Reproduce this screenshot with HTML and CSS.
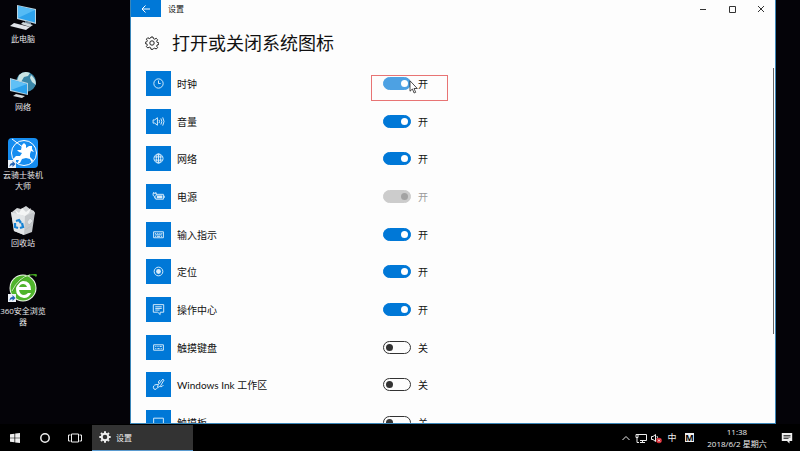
FILE: index.html
```html
<!DOCTYPE html>
<html lang="zh-CN">
<head>
    <meta charset="UTF-8">
    <meta name="viewport" content="width=device-width, initial-scale=1.0">
    <title>设置</title>
    <link rel="stylesheet" href="styles.css">
</head>
<body>

    <div class="desktop">
        <nav class="shortcuts">
            <button type="button" class="shortcut">
                <svg viewBox="0 0 32 32">
                    <path d="M10 4l19 4v15l-19-5z" fill="#b9d3e0"/>
                    <path d="M11 5l17 4v12.500l-17-4.500z" fill="#2da2ec"/>
                    <path d="M11 5l17 4-17 8z" fill="#55bbf5"/>
                    <path d="M18 20l6 1v3l-6-2z" fill="#71889a"/>
                    <path d="M16 21l10 3-3 2-9-3z" fill="#cfd8dc"/>
                    <path d="M7 22l16 4-4 3-16-4z" fill="#dfe3e8"/>
                </svg>
                <span>此电脑</span>
            </button>
            <button type="button" class="shortcut">
                <svg viewBox="0 0 32 32">
                    <circle cx="19" cy="13" r="10" fill="#3a87a8"/>
                    <path d="M12 6q5-5 11-2l-2 3-4 1-3 5-4-1zM24 6q5 4 5 10l-4-3-2-4z" fill="#c9e4e4"/>
                    <path d="M3 9l18 5v12l-18-4z" fill="#b9d3e0"/>
                    <path d="M4 10.500l16 4.500v10l-16-4z" fill="#2da2ec"/>
                    <path d="M4 10.500l16 4.500-16 6z" fill="#60c0f6"/>
                    <path d="M9 25l9 2-3 2-9-2z" fill="#d4dadd"/>
                </svg>
                <span>网络</span>
            </button>
            <button type="button" class="shortcut">
                <svg viewBox="0 0 32 32">
                    <rect x="1" y="1" width="30" height="30" rx="4" fill="#168df0"/>
                    <circle cx="17" cy="16" r="12.500" fill="none" stroke="#fff"/>
                    <path d="M5 2l12 9" stroke="#fff"/>
                    <path d="M15 8l2-2 2 2v3l3-2 3 0v3l2 3-3-1-1 3 0 3 3 3-1 3-2-4-4-1-4 1-2 4-3 1 2-4-3 0-2 2-1-3 3-3 4 0 2-3-3-1-2-2 4 0z" fill="#fff"/>
                    <rect x="1" y="23" width="8" height="8" fill="#eef3f8"/>
                    <path d="M2.500 30q0-4 3-4v-2l3 3-3 3v-2q-2 0-3 2z" fill="#2464b4"/>
                </svg>
                <span>云骑士装机<br>大师</span>
            </button>
            <button type="button" class="shortcut">
                <svg viewBox="0 0 32 32">
                    <path d="M5 7l5-4 4 1 5-3 4 3 4 2 1 3-7 3-14-3z" fill="#d2d5d7"/>
                    <path d="M4 7l14 4 10-4-3 20-8 3-10-4z" fill="#c4c7ca"/>
                    <path d="M4 7l14 4-1 19-10-4z" fill="#e3e6e8"/>
                    <path d="M8 5l4 3 3-5 4 4 5-4-2 5-4 3-8-2z" fill="#f4f5f5"/>
                    <path d="M20 17l3-4 3 3-4 4zM18 25l6-4" fill="#e3e6e8" stroke="#afb3b7" stroke-width=".500"/>
                    <path d="M9 16l3-1 2 3M15 18l1 4-3 1M11 23l-3-1 0-4" fill="none" stroke="#1783d4" stroke-width="2.300"/>
                </svg>
                <span>回收站</span>
            </button>
            <button type="button" class="shortcut">
                <svg viewBox="0 0 32 32">
                    <circle cx="16" cy="15" r="13.500" fill="#f3faee"/>
                    <circle cx="16" cy="15" r="12.500" fill="#4fb42b"/>
                    <path d="M24 17H12q1 5 5 5 2 0 4-2h3q-2 5-7 5-8-1-8-9 0-7 7-8 8 0 8 9zM12 14h8q-1-3-4-3t-4 3z" fill="#fff" fill-rule="evenodd"/>
                    <path d="M5 18Q13 0 29 1q2 1 0 3-2-3-7-1-9 3-15 15z" fill="#43a321"/>
                    <path d="M5 18Q12 4 23 2" fill="none" stroke="#e6f6dc" stroke-width=".800"/>
                    <rect x="1" y="21" width="8" height="8" fill="#eef3f8"/>
                    <path d="M2.500 28q0-4 3-4v-2l3 3-3 3v-2q-2 0-3 2z" fill="#2464b4"/>
                </svg>
                <span>360安全浏览<br>器</span>
            </button>
        </nav>

        <main class="window">
            <header class="titlebar">
                <button type="button" class="back" aria-label="返回">
                    <svg viewBox="0 0 10 10"><path d="M9 5H1M4.500 1.500L1 5l3.500 3.500"/></svg>
                </button>
                <span class="caption">设置</span>
                <button type="button" class="win-btn" aria-label="最小化">
                    <svg viewBox="0 0 8 8"><path d="M1 4.500h6"/></svg>
                </button>
                <button type="button" class="win-btn" aria-label="最大化">
                    <svg viewBox="0 0 8 8"><path d="M1.500 1.500h6v6h-6z"/></svg>
                </button>
                <button type="button" class="win-btn" aria-label="关闭">
                    <svg viewBox="0 0 8 8"><path d="M1 1l6 6M7 1L1 7"/></svg>
                </button>
            </header>

            <div class="heading">
                <svg viewBox="0 0 14 14">
                    <path d="M6 1h2l.400 1.600 1.300.600 1.500-.900 1.400 1.400-.900 1.500.500 1.200 1.600.400v1.700l-1.600.400-.500 1.300.900 1.400-1.400 1.400-1.500-.800-1.300.500L8 13.300H6l-.400-1.600-1.300-.500-1.500.800-1.400-1.400.900-1.400-.500-1.300L.300 7.600V6.200l1.500-.400.500-1.200-.900-1.500 1.400-1.400 1.500.900 1.300-.600z"/>
                    <circle cx="7" cy="7" r="2.200"/>
                </svg>
                <h1>打开或关闭系统图标</h1>
            </div>

            <ul class="icon-list">
                <li>
                    <span class="tile"><svg viewBox="0 0 12 12"><circle cx="6" cy="6" r="4.300"/><path d="M6 3.200V6h2"/></svg></span>
                    <label for="clock">时钟</label>
                    <input type="checkbox" id="clock" class="hover" checked><span class="state">开</span>
                    <span class="marker"></span>
                    <svg class="cursor" viewBox="0 0 9 14"><path d="M1 .800v10.400l2.400-2.200 1.700 4 1.600-.700-1.700-3.800h3.300z"/></svg>
                </li>
                <li>
                    <span class="tile"><svg viewBox="0 0 12 12"><path d="M1 4.500h1.500L5 2.500v7L2.500 7.500H1zM6.500 4.500q1 1.500 0 3M8.200 3.200q1.800 2.800 0 5.600M9.900 2.200q2.400 3.800 0 7.600"/></svg></span>
                    <label for="volume">音量</label>
                    <input type="checkbox" id="volume" checked><span class="state">开</span>
                </li>
                <li>
                    <span class="tile"><svg viewBox="0 0 12 12"><circle cx="6" cy="6" r="4.200"/><ellipse cx="6" cy="6" rx="2" ry="4.200"/><path d="M2.300 4.500h7.400M2.300 7.500h7.400M6 2v8"/></svg></span>
                    <label for="network">网络</label>
                    <input type="checkbox" id="network" checked><span class="state">开</span>
                </li>
                <li>
                    <span class="tile"><svg viewBox="0 0 12 12"><path d="M4 4h6.500v4.500H3.500V7M11.300 5.300v2M1 3v2q1.500 2 3 0V3zM1.500 3V2M3.500 3V2M2.500 6v1.500h1"/><path class="solid" d="M4.500 5h5v2.700h-5z"/></svg></span>
                    <label for="power">电源</label>
                    <input type="checkbox" id="power" checked disabled><span class="state off">开</span>
                </li>
                <li>
                    <span class="tile"><svg viewBox="0 0 12 12"><path d="M1.500 3.500h9v5.500h-9zM2.800 5h1M4.800 5h1M6.800 5h1M8.500 5h1M3 6.300h6M2.800 7.700h1M4.500 7.700h3M8.300 7.700h1"/></svg></span>
                    <label for="input">输入指示</label>
                    <input type="checkbox" id="input" checked><span class="state">开</span>
                </li>
                <li>
                    <span class="tile"><svg viewBox="0 0 12 12"><circle cx="6" cy="6" r="4"/><circle class="solid" cx="6" cy="6" r="2.200"/></svg></span>
                    <label for="location">定位</label>
                    <input type="checkbox" id="location" checked><span class="state">开</span>
                </li>
                <li>
                    <span class="tile"><svg viewBox="0 0 12 12"><path d="M1.200 1.500h9.600v7H7.500v2.200L5.300 8.500H1.200zM3 3.500h6M3 5h6M3 6.500h4"/></svg></span>
                    <label for="action">操作中心</label>
                    <input type="checkbox" id="action" checked><span class="state">开</span>
                </li>
                <li>
                    <span class="tile"><svg viewBox="0 0 12 12"><path d="M1.500 3.500h9v5h-9zM3 5h1M5 5h1M7 5h2M3 7h1M5 7h2M8 7h1"/></svg></span>
                    <label for="touch">触摸键盘</label>
                    <input type="checkbox" id="touch"><span class="state">关</span>
                </li>
                <li>
                    <span class="tile"><svg viewBox="0 0 12 12"><path d="M10 1L6 6 5 8l1.500.500 1.500-1.500L11 2zM5.500 6Q1.500 5.800 1.200 8.500q0 2.500 2.500 2L5.500 8.500M7.500 8q2 .500 3-1.500M7.500 2q-2 .500-1.500 3"/></svg></span>
                    <label for="ink">Windows Ink 工作区</label>
                    <input type="checkbox" id="ink"><span class="state">关</span>
                </li>
                <li>
                    <span class="tile"><svg viewBox="0 0 12 12"><path d="M1.500 2h9v8h-9zM1.500 7.500h9M6 7.500V10"/></svg></span>
                    <label for="touchpad">触摸板</label>
                    <input type="checkbox" id="touchpad"><span class="state">关</span>
                </li>
            </ul>
            <span class="scrollbar"></span>
        </main>
    </div>

    <footer class="taskbar">
        <button type="button" aria-label="开始">
            <svg viewBox="0 0 12 12"><path class="solid" d="M1 2.300l4.500-.600v4H1zM6.200 1.600L11 1v4.700H6.200zM1 6.300h4.500v4L1 9.700zM6.200 6.300H11V11l-4.800-.600z"/></svg>
        </button>
        <button type="button" aria-label="搜索">
            <svg viewBox="0 0 12 12"><circle cx="6" cy="6" r="4.200" stroke-width="1.500"/></svg>
        </button>
        <button type="button" aria-label="任务视图">
            <svg class="wide" viewBox="0 0 14 12"><path d="M3.500 2h7v8h-7zM2.500 3h-2v6h2M11.500 3h2v6h-2"/></svg>
        </button>
        <button type="button" class="app">
            <svg viewBox="0 0 12 12">
                <circle cx="6" cy="6" r="3.300" stroke-width="2"/>
                <path d="M6 .300v2M6 9.700v2M.300 6h2M9.700 6h2M2 2l1.300 1.300M8.700 8.700L10 10M10 2L8.700 3.300M3.300 8.700L2 10" stroke-width="2"/>
            </svg>
            设置
        </button>
        <div class="tray">
            <svg viewBox="0 0 12 12"><path d="M2.500 8L6 4.500 9.500 8"/></svg>
            <svg viewBox="0 0 12 12"><path d="M3 2.500h8.500v6H5M7.500 8.500v2M5 10.500h5M1 2.500h2v3H1zM2 5.500v5h2"/></svg>
            <svg viewBox="0 0 12 12"><path d="M1.500 4.500H3l2.500-2v7L3 7.500H1.500z"/><path d="M7 4q1 2 0 3"/><circle cx="9" cy="8.500" r="2.800" fill="#d92b35" stroke="none"/><path d="M8 7.500l2 2M10 7.500l-2 2"/></svg>
            <span class="ime">中</span>
            <span class="ime-mode">M</span>
        </div>
        <time class="clock"><span>11:38</span><span>2018/6/2 星期六</span></time>
        <button type="button" class="notice" aria-label="通知">
            <svg viewBox="0 0 12 12"><path class="solid" d="M.800 1h10.400v8H8.500v2.500L6 9H.800z"/><path d="M2.500 3.500h7M2.500 5h7M2.500 6.500h5" stroke="#000" stroke-width=".700"/></svg>
        </button>
    </footer>

</body>
</html>
```
FILE: styles.css
```css
* {
    box-sizing: border-box;
}
body {
    margin: 0;
    height: 100vh;
    display: flex;
    flex-direction: column;
    overflow: hidden;
    background: #040308;
    color: #111;
    font-family: "Open Sans", "Noto Sans CJK SC", sans-serif;
    font-size: 10px;
}
button {
    margin: 0;
    padding: 0;
    border: none;
    background: none;
    color: inherit;
    font-family: inherit;
    font-size: 8px;
}
svg {
    display: block;
    flex-shrink: 0;
    fill: none;
}

/* Desktop */
.desktop {
    flex: 1;
    min-height: 0;
    display: flex;
    padding-right: 24px;
}
.shortcuts {
    width: 130px;
    flex-shrink: 0;
}
.shortcut {
    width: 46px;
    height: 68px;
    padding-top: 1px;
    display: flex;
    flex-direction: column;
    align-items: center;
    color: #e8e8e8;
    line-height: 11px;
    white-space: nowrap;
}
.shortcut svg {
    width: 32px;
    height: 32px;
}

/* Settings window */
.window {
    flex: 1;
    position: relative;
    display: flex;
    flex-direction: column;
    overflow: hidden;
    background: #fdfdfd;
    border: 1px solid #3b86b8;
    border-top: none;
}
.titlebar {
    display: flex;
    align-items: center;
    height: 17px;
}
.titlebar svg {
    width: 8px;
    height: 8px;
    stroke: #333;
}
.back {
    width: 30px;
    height: 17px;
    display: flex;
    justify-content: center;
    align-items: center;
    background: #0078d7;
}
.titlebar .back svg {
    width: 10px;
    height: 10px;
    stroke: #fff;
}
.caption {
    flex: 1;
    padding-left: 7px;
    font-size: 8px;
    line-height: 16px;
}
.win-btn {
    width: 29px;
    height: 17px;
    display: flex;
    justify-content: center;
    align-items: center;
}
.heading {
    display: flex;
    align-items: center;
    gap: 13px;
    padding: 12px 14px;
}
.heading svg {
    width: 14px;
    height: 14px;
    stroke: #222;
}
h1 {
    margin: 0;
    font-size: 18px;
    font-weight: normal;
    line-height: 28px;
}

/* Rows run on under the taskbar */
.icon-list {
    flex: 1;
    display: flex;
    flex-direction: column;
    justify-content: space-between;
    margin: 2px 15px -12px;
    padding: 0;
    list-style: none;
}
.icon-list li {
    position: relative;
    display: flex;
    align-items: center;
    height: 25px;
}
.tile {
    width: 25px;
    height: 25px;
    display: flex;
    justify-content: center;
    align-items: center;
    background: #0078d7;
}
.tile svg {
    width: 13px;
    height: 13px;
    stroke: #d8ecfb;
    stroke-width: 0.9;
}
.tile .solid {
    fill: #d8ecfb;
    stroke: none;
}
label {
    width: 206px;
    margin-left: 6px;
    font-family: Lato, "Noto Sans CJK SC", sans-serif;
}
input {
    appearance: none;
    width: 28px;
    height: 13px;
    margin: 0;
    padding: 2px;
    display: flex;
    align-items: center;
    border: 1px solid #333;
    border-radius: 7px;
}
input::before {
    content: "";
    width: 7px;
    height: 7px;
    border-radius: 50%;
    background: #333;
}
input:checked {
    justify-content: flex-end;
    background: #0078d7;
    border-color: #0078d7;
}
input:checked::before {
    background: #fff;
}
input.hover {
    background: #4da1e3;
    border-color: #4da1e3;
}
input:disabled {
    background: #ccc;
    border-color: #ccc;
}
input:disabled::before {
    background: #a3a3a3;
}
.state {
    margin-left: 7px;
}
.state.off {
    color: #999;
}
.marker {
    position: absolute;
    left: 225px;
    top: 4px;
    width: 77px;
    height: 26px;
    border: 1px solid #e87474;
}
.cursor {
    position: absolute;
    left: 263px;
    top: 9px;
    width: 9px;
    height: 14px;
    fill: #fff;
    stroke: #222;
    stroke-width: 0.8;
}
.scrollbar {
    position: absolute;
    right: 1px;
    top: 16%;
    bottom: 21%;
    width: 1px;
    background: #666;
}

/* Taskbar */
.taskbar {
    height: 27px;
    display: flex;
    align-items: center;
    padding-right: 6px;
    background: #000;
    color: #eee;
}
.taskbar button {
    width: 30px;
    height: 26px;
    display: flex;
    justify-content: center;
    align-items: center;
}
.taskbar svg {
    width: 12px;
    height: 12px;
    stroke: #eee;
}
.taskbar svg.wide {
    width: 14px;
}
.taskbar .solid {
    fill: #eee;
    stroke: none;
}
.taskbar .app {
    width: 101px;
    margin-left: 2px;
    padding-left: 7px;
    justify-content: flex-start;
    gap: 5px;
    background: #333;
    border-bottom: 1px solid #5a9bd0;
}
.tray {
    display: flex;
    align-items: center;
    gap: 3px;
    margin-left: auto;
}
.ime {
    width: 14px;
    font-size: 9px;
    text-align: center;
}
.ime-mode {
    width: 9px;
    margin-left: 3px;
    background: #eee;
    color: #000;
    font-size: 9px;
    font-weight: bold;
    line-height: 9px;
    text-align: center;
}
.clock {
    display: flex;
    flex-direction: column;
    width: 86px;
    font-size: 8px;
    line-height: 12px;
    text-align: center;
}
.taskbar .notice {
    width: 14px;
}
```
